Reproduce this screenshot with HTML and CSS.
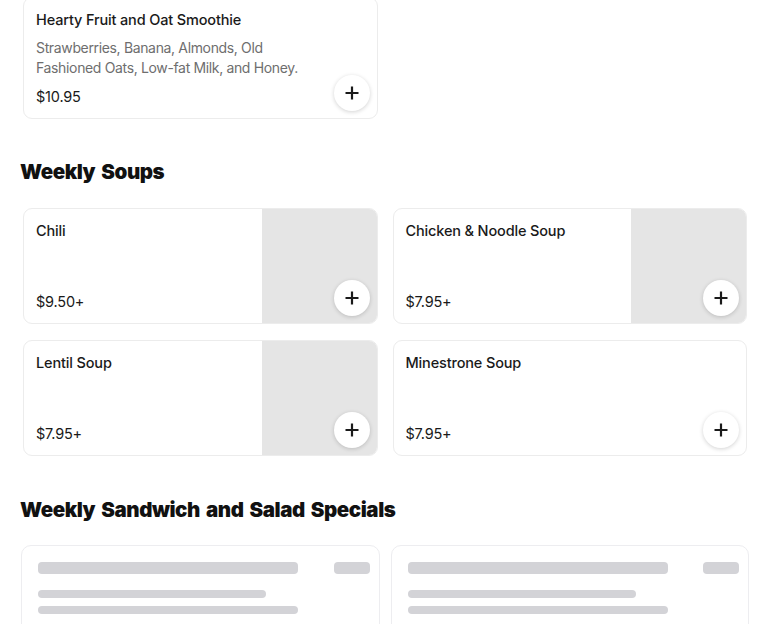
FILE: index.html
```html
<!DOCTYPE html>
<html lang="en">
<head>
<meta charset="utf-8">
<title>Menu</title>
<link rel="stylesheet" href="styles.css">
</head>
<body>
<main class="menu">
  <section class="grid grid-items first">
    <article class="card card-text">
      <div class="card-body">
        <h3 class="item-title">Hearty Fruit and Oat Smoothie</h3>
        <p class="item-desc">Strawberries, Banana, Almonds, Old Fashioned Oats, Low-fat Milk, and Honey.</p>
        <p class="item-price">$10.95</p>
      </div>
      <button class="add-btn" aria-label="Add"><svg viewBox="0 0 16 16" width="16" height="16"><path d="M8 1.5v13M1.5 8h13" stroke="#1a1a1a" stroke-width="2.2" fill="none"/></svg></button>
    </article>
  </section>

  <h2 class="section-title">Weekly Soups</h2>
  <section class="grid grid-items">
    <article class="card card-img">
      <div class="card-body split">
        <h3 class="item-title">Chili</h3>
        <p class="item-price">$9.50+</p>
      </div>
      <div class="thumb"></div>
      <button class="add-btn" aria-label="Add"><svg viewBox="0 0 16 16" width="16" height="16"><path d="M8 1.5v13M1.5 8h13" stroke="#1a1a1a" stroke-width="2.2" fill="none"/></svg></button>
    </article>
    <article class="card card-img">
      <div class="card-body split">
        <h3 class="item-title">Chicken &amp; Noodle Soup</h3>
        <p class="item-price">$7.95+</p>
      </div>
      <div class="thumb"></div>
      <button class="add-btn" aria-label="Add"><svg viewBox="0 0 16 16" width="16" height="16"><path d="M8 1.5v13M1.5 8h13" stroke="#1a1a1a" stroke-width="2.2" fill="none"/></svg></button>
    </article>
    <article class="card card-img">
      <div class="card-body split">
        <h3 class="item-title">Lentil Soup</h3>
        <p class="item-price">$7.95+</p>
      </div>
      <div class="thumb"></div>
      <button class="add-btn" aria-label="Add"><svg viewBox="0 0 16 16" width="16" height="16"><path d="M8 1.5v13M1.5 8h13" stroke="#1a1a1a" stroke-width="2.2" fill="none"/></svg></button>
    </article>
    <article class="card card-plain">
      <div class="card-body split">
        <h3 class="item-title">Minestrone Soup</h3>
        <p class="item-price">$7.95+</p>
      </div>
      <button class="add-btn" aria-label="Add"><svg viewBox="0 0 16 16" width="16" height="16"><path d="M8 1.5v13M1.5 8h13" stroke="#1a1a1a" stroke-width="2.2" fill="none"/></svg></button>
    </article>
  </section>

  <h2 class="section-title">Weekly Sandwich and Salad Specials</h2>
  <section class="grid grid-skeleton">
    <div class="skel-card">
      <div class="skel-row">
        <span class="bar bar-title"></span>
        <span class="bar bar-price"></span>
      </div>
      <span class="bar bar-line short"></span>
      <span class="bar bar-line long"></span>
    </div>
    <div class="skel-card">
      <div class="skel-row">
        <span class="bar bar-title"></span>
        <span class="bar bar-price"></span>
      </div>
      <span class="bar bar-line short"></span>
      <span class="bar bar-line long"></span>
    </div>
  </section>
</main>
</body>
</html>
```

FILE: styles.css
```css
* { box-sizing: border-box; }

html, body {
  margin: 0;
  padding: 0;
  background: #ffffff;
  overflow: hidden;
}

body {
  font-family: Inter, "Liberation Sans", Arial, sans-serif;
  color: #1a1a1a;
  -webkit-font-smoothing: antialiased;
}

.menu {
  padding: 0 20px;
  height: 624px;
  overflow: hidden;
}

.grid {
  display: grid;
  grid-template-columns: 1fr 1fr;
}

.grid-items {
  padding: 0 3px;
  column-gap: 15px;
  row-gap: 16px;
}

.grid-items.first {
  margin-top: -3px;
}

.card {
  position: relative;
  border: 1px solid #ececec;
  border-radius: 9px;
  background: #fff;
  overflow: hidden;
}

.card-img {
  display: grid;
  grid-template-columns: 1fr 115px;
  height: 116px;
}

.card-plain {
  height: 116px;
  display: flex;
}

.card-plain .card-body { flex: 1; }

.card-body {
  padding: 12px 12px 11px 12px;
}

.card-body.split {
  display: flex;
  flex-direction: column;
  justify-content: space-between;
  padding-bottom: 11px;
}

.item-title {
  margin: 0;
  font-size: 14.5px;
  line-height: 20px;
  font-weight: 500;
  color: #1a1a1a;
  letter-spacing: -0.15px;
}

.item-desc {
  margin: 8px 0 0;
  font-size: 14px;
  line-height: 20px;
  color: #6e6e6e;
  max-width: 275px;
  letter-spacing: -0.35px;
}

.item-price {
  margin: 9px 0 0;
  font-size: 14.5px;
  line-height: 20px;
  color: #1a1a1a;
  letter-spacing: -0.2px;
}

.split .item-price { margin: 0; }

.thumb {
  background: #e5e5e5;
  height: 100%;
}

.add-btn {
  position: absolute;
  right: 7px;
  bottom: 7px;
  width: 36px;
  height: 36px;
  border-radius: 50%;
  border: none;
  background: #fff;
  box-shadow: 0 1px 4px rgba(0, 0, 0, 0.18);
  display: flex;
  align-items: center;
  justify-content: center;
  padding: 0;
}

.section-title {
  margin: 39px 0 22px;
  font-size: 20.5px;
  line-height: 28px;
  font-weight: 900;
  letter-spacing: -0.45px;
  word-spacing: 2.5px;
  color: #111;
}

.grid-items + .section-title { margin-top: 40px; }
.first + .section-title { margin-top: 39px; }

.grid-skeleton {
  padding: 0 1px;
  column-gap: 11px;
  margin-top: -1px;
}

.skel-card {
  border: 1px solid #ededf0;
  border-radius: 10px;
  padding: 16px 9px 16px 16px;
  display: flex;
  flex-direction: column;
  height: 100px;
}

.skel-row {
  display: flex;
  justify-content: space-between;
  align-items: center;
}

.bar {
  display: block;
  background: #d3d3d7;
  border-radius: 4px;
}

.bar-title { width: 260px; height: 12px; }
.bar-price { width: 36px; height: 12px; }

.bar-line { height: 8px; }
.bar-line.short { width: 228px; margin-top: 16px; }
.bar-line.long { width: 260px; margin-top: 8px; }
```
